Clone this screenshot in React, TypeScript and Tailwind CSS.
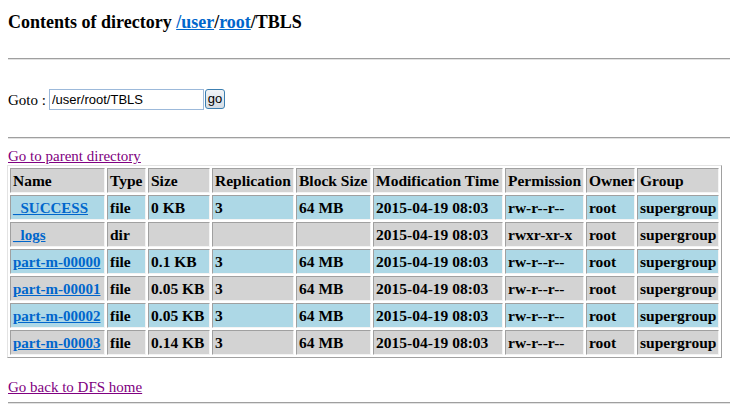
import React from "react";

type Row = {
  name: string;
  type: string;
  size: string;
  replication: string;
  blockSize: string;
  modified: string;
  permission: string;
  owner: string;
  group: string;
};

const rows: Row[] = [
  { name: "_SUCCESS", type: "file", size: "0 KB", replication: "3", blockSize: "64 MB", modified: "2015-04-19 08:03", permission: "rw-r--r--", owner: "root", group: "supergroup" },
  { name: "_logs", type: "dir", size: "", replication: "", blockSize: "", modified: "2015-04-19 08:03", permission: "rwxr-xr-x", owner: "root", group: "supergroup" },
  { name: "part-m-00000", type: "file", size: "0.1 KB", replication: "3", blockSize: "64 MB", modified: "2015-04-19 08:03", permission: "rw-r--r--", owner: "root", group: "supergroup" },
  { name: "part-m-00001", type: "file", size: "0.05 KB", replication: "3", blockSize: "64 MB", modified: "2015-04-19 08:03", permission: "rw-r--r--", owner: "root", group: "supergroup" },
  { name: "part-m-00002", type: "file", size: "0.05 KB", replication: "3", blockSize: "64 MB", modified: "2015-04-19 08:03", permission: "rw-r--r--", owner: "root", group: "supergroup" },
  { name: "part-m-00003", type: "file", size: "0.14 KB", replication: "3", blockSize: "64 MB", modified: "2015-04-19 08:03", permission: "rw-r--r--", owner: "root", group: "supergroup" },
];

const headers = ["Name", "Type", "Size", "Replication", "Block Size", "Modification Time", "Permission", "Owner", "Group"];
const widths = [95, 39, 62, 82, 75, 130, 79, 49, 82];

const cell =
  "h-[25px] px-[2px] py-0 align-middle text-left font-bold text-[15.5px] leading-[18px] border border-t-[#a0a0a0] border-l-[#a0a0a0] border-r-[#f4f4f4] border-b-[#f4f4f4]";

const Hr = () => <div className="h-[2px] border-t border-t-[#9f9f9f] border-b border-b-[#e2e2e2]" />;

const App: React.FC = () => {
  return (
    <div className="min-h-[404px] bg-white px-[8px] text-black font-['Liberation_Serif','Times_New_Roman',serif]">
      <div className="pt-[11px] text-[18px] leading-[22px] font-bold">
        Contents of directory{" "}
        <a href="#" className="text-[#0066cc] underline">/user</a>/
        <a href="#" className="text-[#0066cc] underline">root</a>/TBLS
      </div>

      <div className="mt-[25px]">
        <Hr />
      </div>

      <div className="mt-[29px] flex items-start h-[21px]">
        <span className="mt-[2px] text-[15px] leading-[18px]">Goto :</span>
        <input
          defaultValue="/user/root/TBLS"
          className="ml-[3px] w-[155px] h-[21px] border border-[#9cb9da] px-[2px] text-[13px] font-['Liberation_Sans',Arial,sans-serif] outline-none"
        />
        <button className="ml-[1px] w-[20px] h-[20px] rounded-[3px] border border-[#3c7fb1] bg-gradient-to-b from-[#f1f4f7] to-[#d5dde5] text-[13px] leading-[18px] font-['Liberation_Sans',Arial,sans-serif] p-0">
          go
        </button>
      </div>

      <div className="mt-[27px]">
        <Hr />
      </div>

      <div className="mt-[8px] text-[15px] leading-[18px]">
        <a href="#" className="text-[#800080] underline">Go to parent directory</a>
      </div>

      <table className="ml-[-1px] w-[715px] table-fixed border-separate border-spacing-[2px] border border-t-[#e3e3e3] border-l-[#e3e3e3] border-r-[#a0a0a0] border-b-[#a0a0a0]">
        <colgroup>
          {widths.map((w, i) => (
            <col key={i} style={{ width: w }} />
          ))}
        </colgroup>
        <thead>
          <tr>
            {headers.map((h) => (
              <th key={h} className={`${cell} bg-[#d3d3d3] whitespace-nowrap`}>
                {h}
              </th>
            ))}
          </tr>
        </thead>
        <tbody>
          {rows.map((r, i) => {
            const bg = i % 2 === 0 ? "bg-[#add8e6]" : "bg-[#d3d3d3]";
            return (
              <tr key={r.name}>
                <td className={`${cell} ${bg}`}>
                  <a href="#" className="text-[#0066cc] underline whitespace-nowrap text-[15px]">{r.name}</a>
                </td>
                <td className={`${cell} ${bg}`}>{r.type}</td>
                <td className={`${cell} ${bg} whitespace-nowrap`}>{r.size}</td>
                <td className={`${cell} ${bg}`}>{r.replication}</td>
                <td className={`${cell} ${bg} whitespace-nowrap`}>{r.blockSize}</td>
                <td className={`${cell} ${bg} whitespace-nowrap`}>{r.modified}</td>
                <td className={`${cell} ${bg} text-[14.5px] whitespace-nowrap`}>{r.permission}</td>
                <td className={`${cell} ${bg}`}>{r.owner}</td>
                <td className={`${cell} ${bg}`}>{r.group}</td>
              </tr>
            );
          })}
        </tbody>
      </table>

      <div className="mt-[20px] text-[15px] leading-[18px]">
        <a href="#" className="text-[#800080] underline">Go back to DFS home</a>
      </div>

      <div className="mt-[6px]">
        <Hr />
      </div>
    </div>
  );
};

export default App;
